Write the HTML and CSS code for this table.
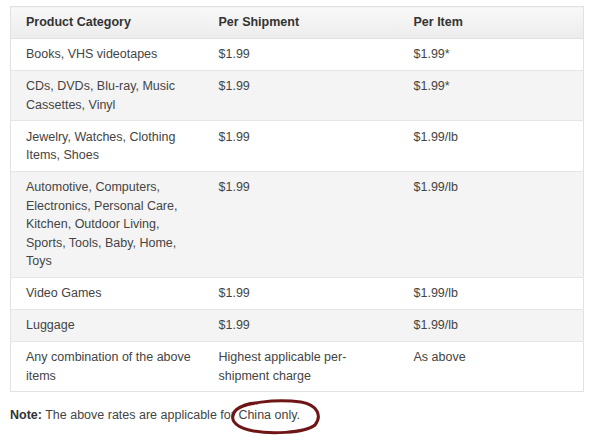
FILE: index.html
```
<!DOCTYPE html>
<html>
<head>
<meta charset="utf-8">
<link rel="stylesheet" href="styles.css">
</head>
<body>
<table class="rates">
  <colgroup>
    <col class="c1"><col class="c2"><col class="c3">
  </colgroup>
  <thead>
    <tr><th>Product Category</th><th>Per Shipment</th><th>Per Item</th></tr>
  </thead>
  <tbody>
    <tr><td>Books, VHS videotapes</td><td>$1.99</td><td>$1.99*</td></tr>
    <tr class="alt"><td>CDs, DVDs, Blu-ray, Music Cassettes, Vinyl</td><td>$1.99</td><td>$1.99*</td></tr>
    <tr><td>Jewelry, Watches, Clothing Items, Shoes</td><td>$1.99</td><td>$1.99/lb</td></tr>
    <tr class="alt"><td>Automotive, Computers, Electronics, Personal Care, Kitchen, Outdoor Living, Sports, Tools, Baby, Home, Toys</td><td>$1.99</td><td>$1.99/lb</td></tr>
    <tr><td>Video Games</td><td>$1.99</td><td>$1.99/lb</td></tr>
    <tr class="alt"><td>Luggage</td><td>$1.99</td><td>$1.99/lb</td></tr>
    <tr><td>Any combination of the above items</td><td>Highest applicable per-shipment charge</td><td>As above</td></tr>
  </tbody>
</table>
<p class="note"><b>Note:</b> The above rates are applicable for <span class="circled">China only.<svg class="ring" viewBox="0 0 92 36" width="92" height="36"><path d="M5 13 C12 3 48 0 72 3 C89 6 93 17 86 26 C76 34 40 36 20 31 C4 27 0 19 7 11 C13 6 22 4 28 4" fill="none" stroke="#6e1515" stroke-width="3" stroke-linecap="round"/></svg></span></p>
</body>
</html>
```
FILE: styles.css
```
html, body {
  margin: 0;
  padding: 0;
  background: #fff;
}
html {
  min-height: 446px;
}
body {
  min-height: 440px;
  padding: 6px 10px 0 10px;
  font-family: "Liberation Sans", Arial, sans-serif;
  font-size: 12.5px;
  color: #444;
}
.rates {
  width: 573px;
  border-collapse: collapse;
  table-layout: fixed;
  border: 1px solid #e2e2e2;
}
.c1 { width: 193px; }
.c2 { width: 195px; }
.c3 { width: 185px; }
.rates th, .rates td {
  text-align: left;
  vertical-align: top;
  padding: 6.5px 8px 6px 15px;
  line-height: 18.5px;
}
.rates th {
  font-weight: bold;
  color: #333;
  padding-top: 6px;
  padding-bottom: 6px;
  background: linear-gradient(#f8f8f8, #ececec);
  border-bottom: 1px solid #e0e0e0;
}
.rates td {
  border-top: 1px solid #e6e6e6;
}
.rates tr.alt td {
  background: #f4f4f4;
}
.note {
  margin: 14px 0 0 0;
  line-height: 18px;
  color: #444;
}
.note b {
  color: #333;
}
.circled {
  position: relative;
}
.ring {
  position: absolute;
  left: -9px;
  top: -9px;
}
```
